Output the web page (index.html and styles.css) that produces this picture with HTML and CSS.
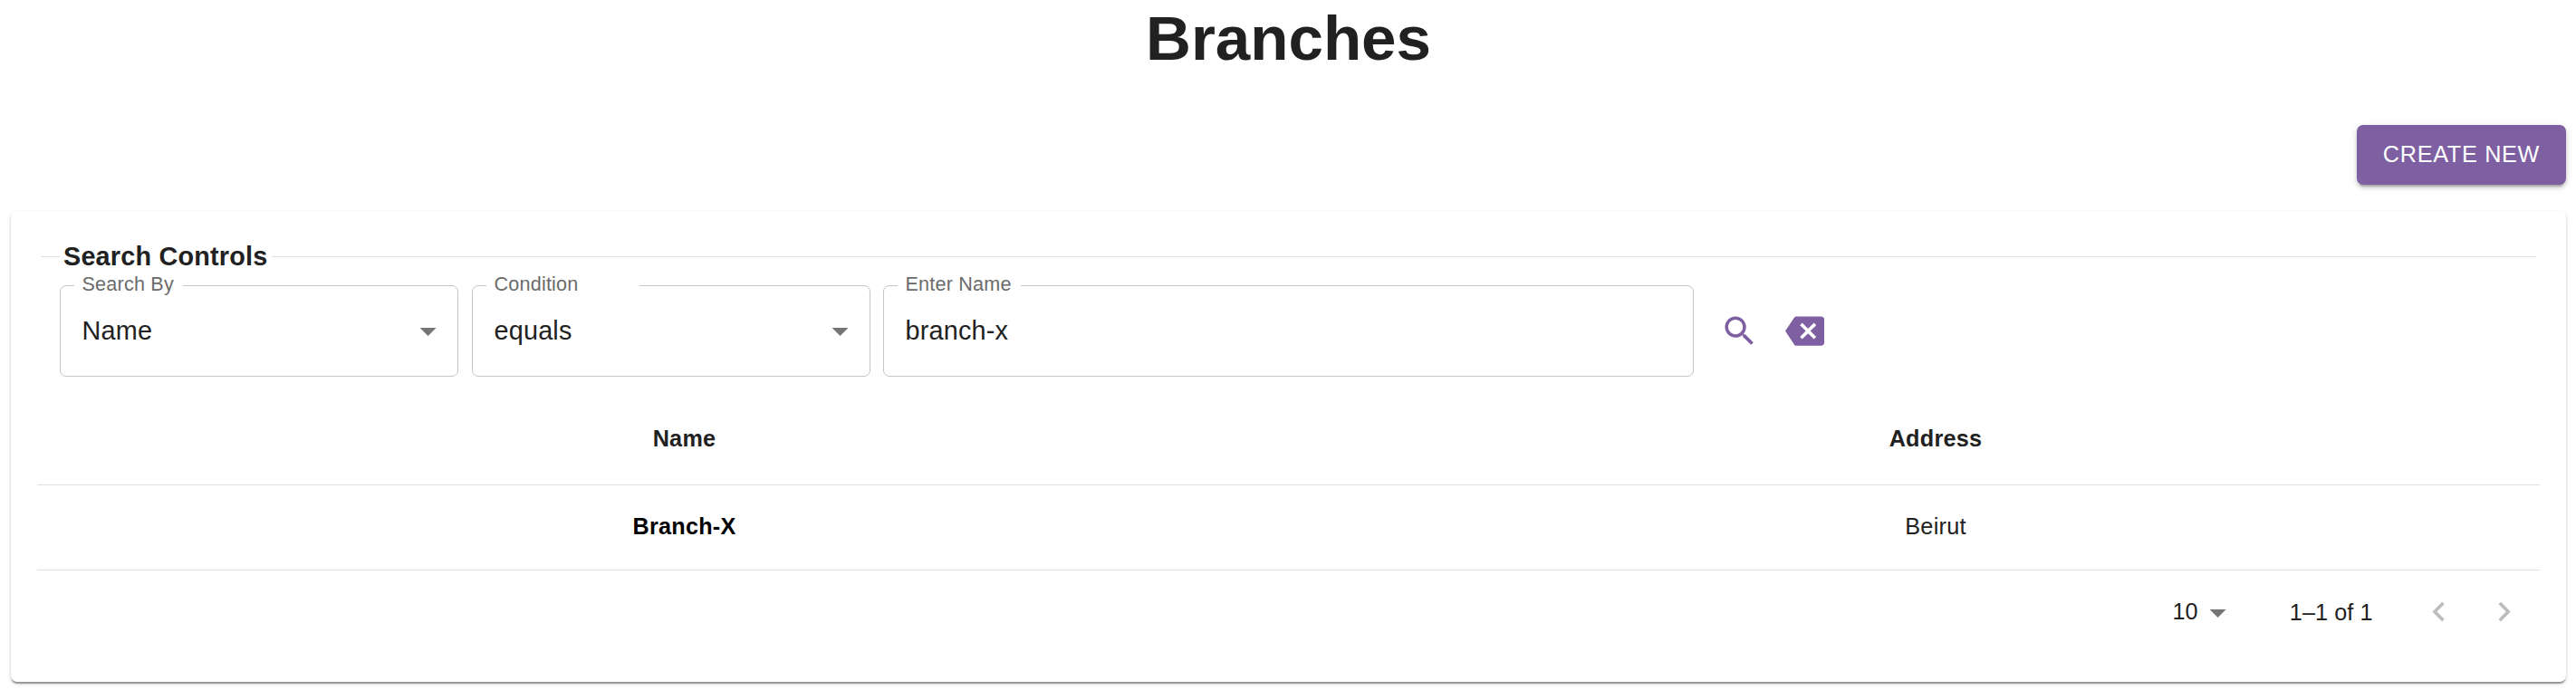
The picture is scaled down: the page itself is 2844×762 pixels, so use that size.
FILE: index.html
```html
<!DOCTYPE html>
<html lang="en">
<head>
<meta charset="utf-8">
<title>Branches</title>
<link rel="stylesheet" href="styles.css">
</head>
<body>
<main class="page">
  <h1 class="title">Branches</h1>
  <div class="actions"><button class="create" type="button">CREATE NEW</button></div>
  <section class="card">
    <div class="legend"><h2 class="legend-text">Search Controls</h2></div>
    <div class="controls">
      <div class="field">
        <span class="label">Search By</span>
        <span class="value">Name</span>
        <svg class="caret" viewBox="0 0 24 24"><path d="M7 10l5 5 5-5z"/></svg>
      </div>
      <div class="field">
        <span class="label label-condition">Condition</span>
        <span class="value">equals</span>
        <svg class="caret" viewBox="0 0 24 24"><path d="M7 10l5 5 5-5z"/></svg>
      </div>
      <div class="field field-name">
        <span class="label">Enter Name</span>
        <span class="value">branch-x</span>
      </div>
      <svg class="icon search" viewBox="0 0 24 24"><path d="M15.5 14h-.79l-.28-.27C15.41 12.59 16 11.11 16 9.5 16 5.91 13.09 3 9.5 3S3 5.91 3 9.5 5.91 16 9.5 16c1.61 0 3.09-.59 4.23-1.57l.27.28v.79l5 4.99L20.49 19l-4.99-5zm-6 0C7.01 14 5 11.99 5 9.5S7.01 5 9.5 5 14 7.01 14 9.5 11.99 14 9.5 14z"/></svg>
      <svg class="icon clear" viewBox="0 0 24 24"><path d="M22 3H7c-.69 0-1.23.35-1.59.88L0 12l5.41 8.11c.36.53.9.89 1.59.89h15c1.1 0 2-.9 2-2V5c0-1.1-.9-2-2-2zm-3 12.59L17.59 17 14 13.41 10.41 17 9 15.59 12.59 12 9 8.41 10.41 7 14 10.59 17.59 7 19 8.41 15.41 12 19 15.59z"/></svg>
    </div>
    <div class="table">
      <div class="row head"><span>Name</span><span>Address</span></div>
      <div class="row body-row"><strong>Branch-X</strong><span>Beirut</span></div>
    </div>
    <div class="pagination">
      <span class="size">10</span>
      <svg class="caret size-caret" viewBox="0 0 24 24"><path d="M7 10l5 5 5-5z"/></svg>
      <span class="range">1–1 of 1</span>
      <svg class="chevron" viewBox="0 0 24 24"><path d="M15.41 7.41L14 6l-6 6 6 6 1.41-1.41L10.83 12z"/></svg>
      <svg class="chevron" viewBox="0 0 24 24"><path d="M10 6L8.59 7.41 13.17 12l-4.58 4.59L10 18l6-6z"/></svg>
    </div>
  </section>
</main>
</body>
</html>
```
FILE: styles.css
```css
* { box-sizing: border-box; }
html { background: #fff; }
body {
  margin: 0;
  min-height: 762px;
  color: #212121;
  font-family: "Liberation Sans", Arial, Helvetica, sans-serif;
}
.page { height: 762px; padding: 0 11px 0 12px; }
.title {
  margin: 0;
  height: 138px;
  font-size: 69.12px;
  line-height: 84px;
  text-align: center;
}
.actions { display: flex; justify-content: flex-end; }
.create {
  width: 231px;
  height: 66px;
  padding: 0 0 2px;
  border: 0;
  border-radius: 7px;
  background: #7e60a2;
  color: #fff;
  font: 25.2px/64px "Liberation Sans", Arial, sans-serif;
  letter-spacing: .72px;
  box-shadow: 0 5px 2px -3px rgba(0,0,0,.2), 0 3px 4px rgba(0,0,0,.14), 0 2px 9px rgba(0,0,0,.12);
}
.card {
  height: 520px;
  margin-top: 29px;
  padding: 36px 29px 0;
  border-radius: 7px;
  background: #fff;
  box-shadow: 0 3px 1px -1px rgba(0,0,0,.24), 0 2px 2px rgba(0,0,0,.16), 0 2px 5px rgba(0,0,0,.14);
}
.legend {
  display: flex;
  align-items: center;
  height: 28px;
  margin: 0 4px;
}
.legend::before, .legend::after {
  content: "";
  height: 1px;
  background: #e0e0e0;
}
.legend::before { width: 21px; }
.legend::after { flex: 1; }
.legend-text {
  width: 234px;
  margin: 0;
  padding-left: 4px;
  font-size: 28.8px;
  line-height: 28px;
  letter-spacing: .2px;
  white-space: nowrap;
}
.controls {
  display: flex;
  gap: 15px;
  height: 101px;
  margin: 18px 0 0 25px;
}
.field {
  position: relative;
  display: flex;
  align-items: center;
  width: 440px;
  height: 101px;
  padding: 0 11px 0 23.5px;
  border: 1px solid #c4c4c4;
  border-radius: 7px;
}
.field-name { width: 895px; margin-left: -1px; }
.label {
  position: absolute;
  left: 15px;
  top: -15px;
  padding: 0 10px 0 8.5px;
  background: #fff;
  color: #6b6b6b;
  font-size: 21.6px;
  line-height: 26px;
  letter-spacing: .2px;
  white-space: nowrap;
}
.label-condition { width: 169px; }
.value { flex: 1; padding-bottom: 2px; font-size: 28.8px; line-height: 34px; letter-spacing: .2px; }
.caret { width: 43.2px; height: 43.2px; fill: #757575; }
.icon { width: 43.2px; height: 43.2px; margin-top: 29px; fill: #7e60a2; }
.search { margin-left: 14px; }
.clear { margin-left: 14px; }
.table { margin-top: 28px; font-size: 25.2px; letter-spacing: .27px; }
.row {
  display: grid;
  grid-template-columns: 1429px 1fr;
  align-items: center;
  height: 94px;
  border-bottom: 1px solid #e0e0e0;
  text-align: center;
}
.row strong { color: #000; }
.head { height: 92px; padding-bottom: 10px; font-weight: bold; }
.body-row { padding-bottom: 2px; }
.pagination {
  display: flex;
  align-items: center;
  height: 92px;
  padding-right: 18px;
  justify-content: flex-end;
  font-size: 25.2px;
  letter-spacing: .1px;
}
.size { padding-bottom: 1px; }
.size-caret { margin: 2px 58px 0 0; }
.range { margin-right: 51px; }
.chevron { width: 43.2px; height: 43.2px; fill: #bdbdbd; }
.chevron + .chevron { margin-left: 29px; }
```
